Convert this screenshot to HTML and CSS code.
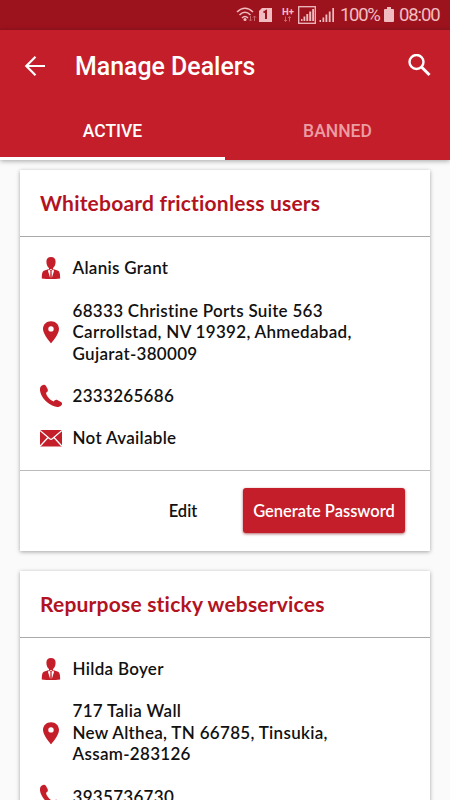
FILE: index.html
```html
<!DOCTYPE html>
<html lang="en">
<head>
    <meta charset="UTF-8">
    <meta name="viewport" content="width=device-width, initial-scale=1.0">
    <title>Manage Dealers</title>
    <link rel="stylesheet" href="styles.css">
</head>
<body>

    <!-- shared icons -->
    <svg class="icon-defs" width="0" height="0">
        <symbol id="icon-user" viewBox="0 0 22 24">
            <path d="M11 1C8 1 6.300 2.800 6.400 5.800C6.400 8.400 7.500 10.900 9 12L9 13L4.500 14.600C2.500 15.300 1.800 17 1.800 22.500Q11 23.500 20.200 22.500C20.200 17 19.500 15.300 17.500 14.600L13 13L13 12C14.500 10.900 15.600 8.400 15.600 5.800C15.700 2.800 14 1 11 1Z"/>
            <path fill="#fff" d="M8.800 13.300L10.400 15L10.200 22L8 15ZM13.200 13.300L11.600 15L11.800 22L14 15ZM9.800 13H12.200L11 14.400Z"/>
        </symbol>
        <symbol id="icon-pin" viewBox="0 0 22 24">
            <path fill-rule="evenodd" d="M11 1.200C6.400 1.200 3 4.600 3 8.900C3 14.500 11 23.200 11 23.200S19 14.500 19 8.900C19 4.600 15.600 1.200 11 1.200ZM11 6.200A2.700 2.700 0 1 1 11 11.600A2.700 2.700 0 1 1 11 6.200Z"/>
        </symbol>
        <symbol id="icon-phone" viewBox="0 0 22 24">
            <path d="M2 1.500C3.500.5 5.200.7 6 2L7.600 5C8.200 6.500 7.700 7.800 6 8.800C6.300 12 10 16.200 13.600 17.400C14.800 15.900 16 15.500 17.300 16.100L21 17.900C22.300 18.700 22.500 19.800 21.600 20.900C20 22.800 17.600 23.300 15 22.600C7.500 20.500.8 13 0 6.500C-.2 4.200.3 2.500 2 1.500Z"/>
        </symbol>
        <symbol id="icon-mail" viewBox="0 0 22 24">
            <path d="M0 4H22V20.500H0Z"/>
            <path fill="none" stroke="#fff" stroke-width="1.300" d="M0 4.500L9.700 12.800Q11 13.700 12.300 12.800L22 4.500M0 20.200L8 11.500M22 20.200L14 11.500"/>
        </symbol>
    </svg>

    <div class="status-bar">
        <svg class="status-icons" width="102" height="30" viewBox="0 0 102 30">
            <g fill="none" stroke="#f0bcc0" stroke-width="1.600">
                <path d="M1 12Q9 4.500 17 12M3.500 15Q9 9.500 14.500 15M6 18Q9 15 12 18"/>
            </g>
            <circle cx="9" cy="19.500" r="1.500" fill="#f0bcc0"/>
            <path d="M14.500 16V21M13 19.500L14.500 21L16 19.500M18.500 21V16M17 17.500L18.500 16L20 17.500" fill="none" stroke="#c9646b"/>
            <path d="M26 8H36V22H23V11Z" fill="#f0bcc0"/>
            <path d="M27.500 12.500L30 11V19" fill="none" stroke="#9c131d" stroke-width="2"/>
            <text x="46" y="15" class="network-type">H+</text>
            <path d="M49.500 16.500V21.500M48 20L49.500 21.500L51 20M53.500 21.500V16.500M52 18L53.500 16.500L55 18" fill="none" stroke="#c9646b"/>
            <rect x="62.700" y="6.700" width="16.600" height="16.600" fill="none" stroke="#f0bcc0" stroke-width="1.300"/>
            <path d="M65 19H66.500V21H65ZM67.500 16.500H69.300V21H67.500ZM70.300 14H72.200V21H70.300ZM73.200 11.500H75.200V21H73.200ZM76.200 9H78V21H76.200Z" fill="#f0bcc0"/>
            <path d="M83.500 20H85V22H83.500ZM86.500 17.500H88.200V22H86.500ZM89.500 14.500H91.300V22H89.500ZM92.800 11.500H94.600V22H92.800ZM96.300 8H98V22H96.300Z" fill="#f0bcc0"/>
        </svg>
        <span class="battery-level">100%</span>
        <svg class="battery" width="10" height="16" viewBox="0 0 10 16">
            <path d="M3 0H7V2H9Q10 2 10 3V14Q10 15 9 15H1Q0 15 0 14V3Q0 2 1 2H3Z" fill="#f0bcc0"/>
        </svg>
        <span class="clock">08:00</span>
    </div>

    <header class="header">
        <div class="toolbar">
            <svg class="back" width="22" height="22" viewBox="0 0 22 22" fill="none" stroke="#fff" stroke-width="2.200">
                <path d="M21 11H3M11.500 1.800L2.300 11L11.500 20.200"/>
            </svg>
            <h1>Manage Dealers</h1>
            <svg class="search" width="24" height="24" viewBox="0 0 24 24" fill="none" stroke="#fff" stroke-width="2.400">
                <circle cx="8.500" cy="8" r="7"/>
                <path d="M13.500 13L21.500 21" stroke-width="3"/>
            </svg>
        </div>
        <nav class="tabs">
            <a class="tab active">ACTIVE</a>
            <a class="tab">BANNED</a>
        </nav>
    </header>

    <main class="dealers">
        <div class="card">
            <h2>Whiteboard frictionless users</h2>
            <div class="details">
                <div class="row">
                    <svg class="icon"><use href="#icon-user"/></svg>
                    <span>Alanis Grant</span>
                </div>
                <div class="row">
                    <svg class="icon"><use href="#icon-pin"/></svg>
                    <span>68333 Christine Ports Suite 563<br>Carrollstad, NV 19392, Ahmedabad,<br>Gujarat-380009</span>
                </div>
                <div class="row">
                    <svg class="icon"><use href="#icon-phone"/></svg>
                    <span>2333265686</span>
                </div>
                <div class="row">
                    <svg class="icon"><use href="#icon-mail"/></svg>
                    <span>Not Available</span>
                </div>
            </div>
            <div class="actions">
                <button class="edit">Edit</button>
                <button class="generate">Generate Password</button>
            </div>
        </div>

        <div class="card">
            <h2>Repurpose sticky webservices</h2>
            <div class="details">
                <div class="row">
                    <svg class="icon"><use href="#icon-user"/></svg>
                    <span>Hilda Boyer</span>
                </div>
                <div class="row">
                    <svg class="icon"><use href="#icon-pin"/></svg>
                    <span>717 Talia Wall<br>New Althea, TN 66785, Tinsukia,<br>Assam-283126</span>
                </div>
                <div class="row">
                    <svg class="icon"><use href="#icon-phone"/></svg>
                    <span>3935736730</span>
                </div>
            </div>
        </div>
    </main>

</body>
</html>
```
FILE: styles.css
```css
* {
    box-sizing: border-box;
}

body {
    font-family: Lato, "Liberation Sans", sans-serif;
    font-variant-ligatures: none;
    background-color: #fafafa;
    height: 800px;
    margin: 0;
    overflow: hidden;
    color: #111;
}

.icon-defs {
    display: none;
}

.status-bar {
    display: flex;
    align-items: center;
    height: 30px;
    padding-left: 236px;
    background-color: #9c131d;
    color: #f0bcc0;
    font-family: Roboto, sans-serif;
    font-size: 18.5px;
}

.status-icons {
    flex: none;
}

.network-type {
    font-size: 9.5px;
    font-weight: 700;
    fill: #f0bcc0;
}

.battery-level {
    width: 46px;
    padding-left: 2px;
    letter-spacing: -1.3px;
}

.battery {
    flex: none;
}

.clock {
    margin-left: 5px;
    letter-spacing: -1.100px;
}

.header {
    position: relative;
    height: 130px;
    background-color: #c41e2a;
    box-shadow: 0 1px 5px rgba(0, 0, 0, 0.35);
    color: #fff;
    font-family: Roboto, sans-serif;
}

.toolbar {
    display: flex;
    align-items: center;
    height: 72px;
    padding: 0 18px 0 24px;
}

.toolbar h1 {
    flex: 1;
    margin: 0 0 0 29px;
    font-size: 24.9px;
    font-weight: 500;
}

.tabs {
    display: flex;
    height: 58px;
}

.tab {
    flex: 1;
    padding-top: 18px;
    border-bottom: 3px solid transparent;
    color: #eb9da3;
    font-size: 17.5px;
    font-weight: 500;
    line-height: 22px;
    text-align: center;
}

.tab.active {
    border-color: #fff;
    color: #fff;
}

.dealers {
    display: flex;
    flex-direction: column;
    gap: 20px;
    padding: 10px 20px 0;
}

.card {
    background-color: #fff;
    box-shadow: 0 1px 4px rgba(0, 0, 0, 0.35);
}

.card h2 {
    height: 67px;
    margin: 0;
    padding-left: 20px;
    border-bottom: 1px solid #aaa;
    color: #b3131f;
    font-size: 21px;
    font-weight: 700;
    letter-spacing: 0.200px;
    line-height: 65.5px;
}

.details {
    display: flex;
    flex-direction: column;
    gap: 20.5px;
    padding: 20.3px 20px 20.5px;
    font-size: 17px;
    font-weight: 600;
    letter-spacing: 0.300px;
    line-height: 21.700px;
}

.row {
    display: flex;
    align-items: center;
    gap: 10.5px;
}

.icon {
    flex: none;
    width: 22px;
    height: 24px;
    margin: -2px 0;
    fill: #c41e2a;
}

.actions {
    display: flex;
    justify-content: flex-end;
    align-items: center;
    height: 81px;
    padding-right: 25px;
    border-top: 1px solid #bbb;
}

.actions button {
    height: 45px;
    border: none;
    font-family: inherit;
    font-size: 16.5px;
    font-weight: 600;
}

.edit {
    width: 90px;
    margin-right: 15px;
    background: none;
    color: #111;
}

.generate {
    width: 162px;
    padding: 0;
    border-radius: 3px;
    background-color: #c41e2a;
    box-shadow: 0 1px 3px rgba(120, 0, 10, 0.6);
    color: #fff;
    white-space: nowrap;
}
```
